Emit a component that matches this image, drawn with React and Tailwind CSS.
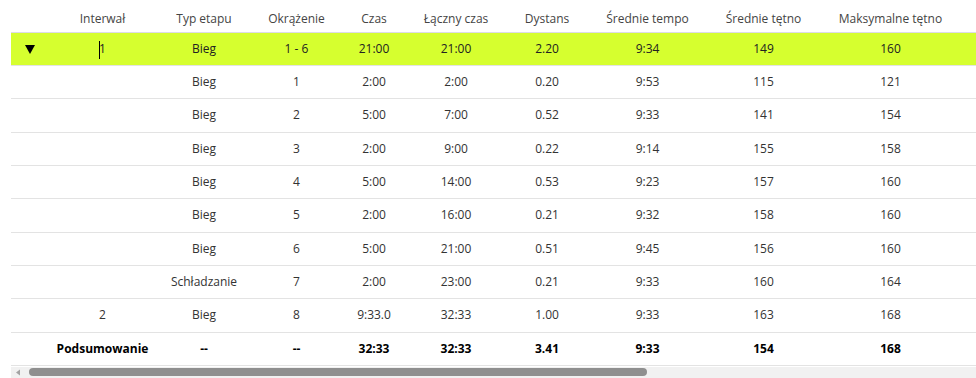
import React from "react";

// column widths measured from the screenshot (first column holds the expand arrow)
const cols = "grid-cols-[36px_111px_92px_93px_62px_102px_80px_121px_111px_143px_560px]";

const headers = [
  "",
  "Interwał",
  "Typ etapu",
  "Okrążenie",
  "Czas",
  "Łączny czas",
  "Dystans",
  "Średnie tempo",
  "Średnie tętno",
  "Maksymalne tętno",
  "",
];

const laps = [
  ["", "Bieg", "1", "2:00", "2:00", "0.20", "9:53", "115", "121"],
  ["", "Bieg", "2", "5:00", "7:00", "0.52", "9:33", "141", "154"],
  ["", "Bieg", "3", "2:00", "9:00", "0.22", "9:14", "155", "158"],
  ["", "Bieg", "4", "5:00", "14:00", "0.53", "9:23", "157", "160"],
  ["", "Bieg", "5", "2:00", "16:00", "0.21", "9:32", "158", "160"],
  ["", "Bieg", "6", "5:00", "21:00", "0.51", "9:45", "156", "160"],
  ["", "Schładzanie", "7", "2:00", "23:00", "0.21", "9:33", "160", "164"],
  ["2", "Bieg", "8", "9:33.0", "32:33", "1.00", "9:33", "163", "168"],
];

const summary = ["Podsumowanie", "--", "--", "32:33", "32:33", "3.41", "9:33", "154", "168"];

const Row = ({ cells, first, className = "" }) => (
  <div className={`grid ${cols} h-[33.33px] border-b border-[#e3e3e3] ${className}`}>
    <div className="flex items-center justify-center">{first}</div>
    {cells.map((c, i) => (
      <div key={i} className="flex items-center justify-center whitespace-nowrap">
        {c}
      </div>
    ))}
    <div />
  </div>
);

const App = () => {
  return (
    <div
      className="w-[976px] h-[378px] overflow-hidden bg-white pl-[11px] text-[12px] text-[#333]"
      style={{ fontFamily: '"Open Sans", "Noto Sans", sans-serif' }}
    >
      <div className="w-[965px] overflow-hidden">
        <div className="w-[1511px]">
          {/* HEADER */}
          <div className={`grid ${cols} h-[33px] border-b border-[#dcdce6] text-[#444]`}>
            {headers.map((h, i) => (
              <div key={i} className="flex items-end justify-center pb-[4px] whitespace-nowrap">
                {h}
              </div>
            ))}
          </div>

          {/* INTERVAL 1 (expanded) */}
          <div className={`grid ${cols} h-[33px] border-b border-[#e3e3e3] bg-[#d6ff2f] text-[#222]`}>
            <div className="flex items-center justify-center pl-[1px]">
              <svg width="10" height="9" viewBox="0 0 10 9">
                <path d="M0 0 H10 L5 9 Z" fill="#000" />
              </svg>
            </div>
            <div className="relative flex items-center justify-center">
              1
              <span className="absolute left-[52px] top-[8px] h-[18px] w-[1px] bg-black" />
            </div>
            {["Bieg", "1 - 6", "21:00", "21:00", "2.20", "9:34", "149", "160"].map((c, i) => (
              <div key={i} className="flex items-center justify-center">
                {c}
              </div>
            ))}
            <div />
          </div>

          {laps.map((lap, i) => (
            <Row key={i} cells={lap} first="" />
          ))}

          {/* SUMMARY */}
          <Row cells={summary} first="" className="font-bold text-black" />
        </div>
      </div>

      {/* horizontal scrollbar */}
      <div className="mt-[1px] flex h-[11px] items-center bg-[#f1f1f1]">
        <svg width="18" height="11" viewBox="0 0 18 11" className="shrink-0">
          <path d="M9 2.5 L5 5.5 L9 8.5 Z" fill="#a3a3a3" />
        </svg>
        <div className="h-[8px] w-[618px] rounded-full bg-[#8f8f8f]" />
      </div>
    </div>
  );
};

export default App;
